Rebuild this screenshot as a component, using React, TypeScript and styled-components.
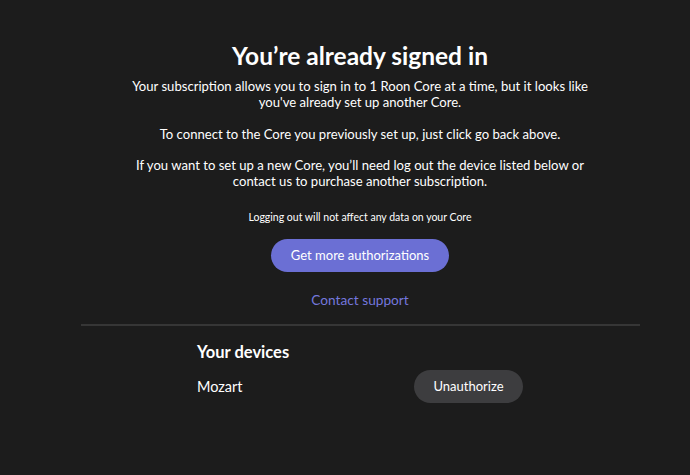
import React from "react";
import styled, { createGlobalStyle } from "styled-components";

const Global = createGlobalStyle`
  html, body {
    margin: 0;
    padding: 0;
    background: #1c1c1c;
  }
  body {
    font-family: Lato, "Noto Sans", sans-serif;
    color: #ffffff;
  }
`;

const Page = styled.main`
  width: 720px;
  display: flex;
  flex-direction: column;
  align-items: center;
  padding-top: 41px;
  box-sizing: border-box;
`;

const Title = styled.h1`
  margin: 0 0 8px;
  font-size: 24.5px;
  font-weight: 700;
  line-height: 29px;
  text-align: center;
`;

const Text = styled.p<{ $small?: boolean }>`
  margin: ${(p) => (p.$small ? "6px 0 15px" : "0 0 15.5px")};
  font-size: ${(p) => (p.$small ? "10.5px" : "13.1px")};
  line-height: ${(p) => (p.$small ? "13px" : "16px")};
  text-align: center;
  max-width: 470px;
`;

const PrimaryButton = styled.button`
  height: 33px;
  width: 178px;
  border: none;
  border-radius: 17px;
  background: #6b6fd4;
  color: #ffffff;
  font-family: inherit;
  font-size: 13px;
  cursor: pointer;
`;

const LinkButton = styled.a`
  margin-top: 19.5px;
  color: #7477dc;
  font-size: 13.7px;
  line-height: 17px;
  cursor: pointer;
`;

const Divider = styled.hr`
  width: 559px;
  margin: 15.5px 0 0;
  border: none;
  height: 2px;
  background: #363636;
`;

const Devices = styled.section`
  width: 326px;
  margin-top: 16.5px;
  display: flex;
  flex-direction: column;
`;

const DevicesHeading = styled.h2`
  margin: 0 0 7.5px;
  font-size: 16.5px;
  font-weight: 700;
  line-height: 20px;
`;

const DeviceRow = styled.div`
  display: flex;
  align-items: center;
  justify-content: space-between;
`;

const DeviceName = styled.span`
  font-size: 14.5px;
  line-height: 17px;
`;

const SecondaryButton = styled.button`
  height: 33px;
  width: 109px;
  border: none;
  border-radius: 17px;
  background: #3d3d3f;
  color: #ffffff;
  font-family: inherit;
  font-size: 13px;
  cursor: pointer;
`;

export default function App() {
  return (
    <>
      <Global />
      <Page>
        <Title>You’re already signed in</Title>
        <Text>
          Your subscription allows you to sign in to 1 Roon Core at a time, but it looks like
          you've already set up another Core.
        </Text>
        <Text>To connect to the Core you previously set up, just click go back above.</Text>
        <Text>
          If you want to set up a new Core, you’ll need log out the device listed below or
          contact us to purchase another subscription.
        </Text>
        <Text $small>Logging out will not affect any data on your Core</Text>
        <PrimaryButton>Get more authorizations</PrimaryButton>
        <LinkButton>Contact support</LinkButton>
        <Divider />
        <Devices>
          <DevicesHeading>Your devices</DevicesHeading>
          <DeviceRow>
            <DeviceName>Mozart</DeviceName>
            <SecondaryButton>Unauthorize</SecondaryButton>
          </DeviceRow>
        </Devices>
      </Page>
    </>
  );
}
